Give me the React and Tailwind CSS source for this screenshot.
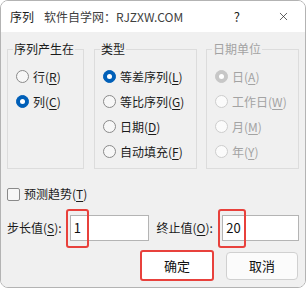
import { X } from 'lucide-react';

const font = { fontFamily: '"Noto Sans CJK SC", "Noto Sans", sans-serif' };

function Key({ children }) {
  return <span className="underline underline-offset-2">{children}</span>;
}

function Radio({ checked, disabled, label, mnemonic }) {
  let dot = 'border-[#8a8a8a] bg-[#f7f7f7]';
  if (checked && !disabled) dot = 'border-[#005fb8] bg-[#005fb8]';
  if (checked && disabled) dot = 'border-[#c7c7c7] bg-[#c7c7c7]';
  if (!checked && disabled) dot = 'border-[#cdcdcd] bg-[#fbfbfb]';

  return (
    <div className="flex h-[25px] items-center">
      <span className={`flex h-[13px] w-[13px] items-center justify-center rounded-full border ${dot}`}>
        {checked && <span className="h-[5px] w-[5px] rounded-full bg-white" />}
      </span>
      <span className={`ml-[4px] text-[12px] leading-[16px] ${disabled ? 'text-[#a3a3a3]' : 'text-[#1b1b1b]'}`}>
        {label}(<Key>{mnemonic}</Key>)
      </span>
    </div>
  );
}

function Group({ title, width, disabled, children }) {
  return (
    <fieldset className={`h-[128px] border border-[#dcdcdc] ${width}`}>
      <legend className={`ml-[5px] px-[1px] text-[12px] leading-[16px] ${disabled ? 'text-[#a3a3a3]' : 'text-[#1b1b1b]'}`}>
        {title}
      </legend>
      <div className="flex flex-col pl-[8px] pt-[7px]">{children}</div>
    </fieldset>
  );
}

function Field({ value, mark }) {
  return (
    <div className="relative h-[26px] w-full">
      <div className="flex h-full items-center border border-[#b4b4b4] bg-white pl-[3px] text-[13px] text-[#111]">
        {value}
      </div>
      <div className={`absolute left-[-4px] top-[-6px] h-[39px] rounded-[3px] border-2 border-[#e8413c] ${mark}`} />
    </div>
  );
}

export default function App() {
  return (
    <div className="h-[291px] w-[307px] bg-white" style={font}>
      <div className="flex h-[288px] w-[306px] flex-col overflow-hidden rounded-[8px] border border-[#b3b3b3]">
        <div className="flex h-[31px] items-center bg-white text-[12px] leading-[16px]">
          <span className="ml-[9px] text-[#1b1b1b]">序列</span>
          <span className="ml-[10px] text-[#404040]">软件自学网：RJZXW.COM</span>
          <span className="ml-auto mr-[37px] text-[13px] text-[#222]">?</span>
          <X className="mr-[15px] h-[13px] w-[13px] text-[#222]" strokeWidth={1.3} />
        </div>

        <div className="flex flex-1 flex-col bg-[#f0f0f0] px-[6px] pt-[9px]">
          <div className="flex">
            <Group title="序列产生在" width="w-[77px]">
              <Radio label="行" mnemonic="R" />
              <Radio label="列" mnemonic="C" checked />
            </Group>
            <div className="ml-[10px]">
              <Group title="类型" width="w-[103px]">
                <Radio label="等差序列" mnemonic="L" checked />
                <Radio label="等比序列" mnemonic="G" />
                <Radio label="日期" mnemonic="D" />
                <Radio label="自动填充" mnemonic="F" />
              </Group>
            </div>
            <div className="ml-[9px]">
              <Group title="日期单位" width="w-[93px]" disabled>
                <Radio label="日" mnemonic="A" checked disabled />
                <Radio label="工作日" mnemonic="W" disabled />
                <Radio label="月" mnemonic="M" disabled />
                <Radio label="年" mnemonic="Y" disabled />
              </Group>
            </div>
          </div>

          <div className="mt-[15px] flex h-[20px] items-center">
            <span className="h-[13px] w-[13px] rounded-[2px] border border-[#8a8a8a] bg-[#f7f7f7]" />
            <span className="ml-[4px] text-[12px] leading-[16px] text-[#1b1b1b]">
              预测趋势(<Key>T</Key>)
            </span>
          </div>

          <div className="mt-[11px] flex items-center text-[12px] leading-[16px] text-[#1b1b1b]">
            <span className="w-[63px]">
              步长值(<Key>S</Key>):
            </span>
            <div className="w-[79px]">
              <Field value="1" mark="w-[23px]" />
            </div>
            <span className="ml-[8px] w-[66px]">
              终止值(<Key>O</Key>):
            </span>
            <div className="w-[77px]">
              <Field value="20" mark="w-[28px]" />
            </div>
          </div>

          <div className="mt-[9px] flex items-center justify-end gap-[12px] pr-[1px] text-[13px] text-[#111]">
            <button className="h-[31px] w-[74px] rounded-[3px] border-2 border-[#e8413c] bg-white">确定</button>
            <button className="h-[28px] w-[72px] rounded-[4px] border border-[#d0d0d0] bg-[#fbfbfb]">取消</button>
          </div>
        </div>
      </div>
    </div>
  );
}
